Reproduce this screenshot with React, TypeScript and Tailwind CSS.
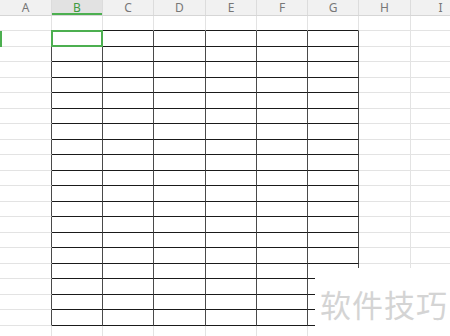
const cols = ["A", "B", "C", "D", "E", "F", "G", "H", "I"];
const colWidths = ["w-[52px]", "w-[51px]", "w-[51px]", "w-[52px]", "w-[51px]", "w-[51px]", "w-[51px]", "w-[52px]", "w-[60px]"];

// row 1 plus table rows 2..20, then a bit of row 21
const rows = Array.from({ length: 21 }, (_, i) => i + 1);

const rowHeight = (r: number) => {
  if (r === 1) return "h-[15px]";
  return r % 2 === 0 ? "h-[16px]" : "h-[15px]";
};

const inTable = (r: number, c: number) => r >= 2 && r <= 20 && c >= 1 && c <= 6;

const Cell = ({ r, c }: { r: number; c: number }) => {
  const table = inTable(r, c);
  const rightBlack = table || (c === 0 && r >= 2 && r <= 20);
  const bottomBlack = table || (r === 1 && c >= 1 && c <= 6);
  return (
    <div
      className={`relative shrink-0 box-border border-b ${colWidths[c]} ${
        rightBlack ? "border-r-[1.5px] border-r-[#4a4a4a]" : "border-r border-r-[#e3e3e3]"
      } ${bottomBlack ? "border-b-[#1a1a1a]" : "border-b-[#e3e3e3]"}`}
    >
      {r === 2 && c === 1 && (
        <div className="absolute -left-px -top-px -right-px -bottom-px border-2 border-[#4caf50]" />
      )}
    </div>
  );
};

export default function App() {
  return (
    <div className="relative w-[450px] h-[336px] overflow-hidden bg-white font-['Noto_Sans',sans-serif]">
      <div className="flex h-[16px] bg-[#f1f1f1] border-b border-[#d6d6d6] box-border">
        {cols.map((c, i) => (
          <div
            key={c}
            className={`shrink-0 flex items-center justify-center pt-[1px] text-[12px] leading-none box-border border-r border-[#dcdcdc] ${colWidths[i]} ${
              c === "B" ? "bg-[#e2e2e2] text-[#3f9a3f] shadow-[inset_0_-2px_0_#4caf50]" : "text-[#777]"
            }`}
          >
            {c}
          </div>
        ))}
      </div>
      {rows.map((r) => (
        <div key={r} className={`flex ${rowHeight(r)}`}>
          {cols.map((_, c) => (
            <Cell key={c} r={r} c={c} />
          ))}
        </div>
      ))}
      <div className="absolute left-0 top-[31px] w-[2px] h-[16px] bg-[#4caf50]" />
      <div className="absolute left-[315px] top-[268px] right-0 bottom-0 bg-white flex items-center pl-[5px] pt-[2px]">
        <span className="text-[31px] leading-none tracking-[1px] text-[#d4d4d4] font-['Noto_Sans_CJK_SC',sans-serif]">
          软件技巧
        </span>
      </div>
    </div>
  );
}
